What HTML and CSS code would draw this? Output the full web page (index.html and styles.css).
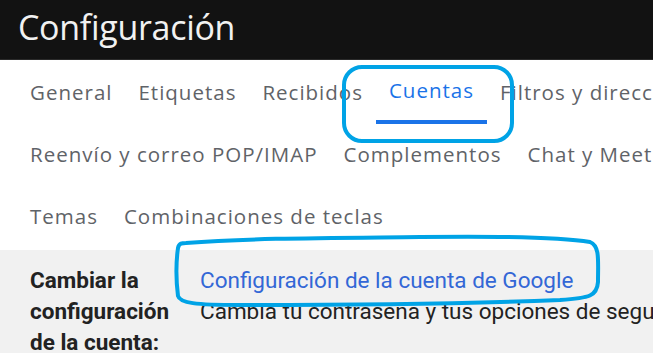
FILE: index.html
```html
<!DOCTYPE html>
<html lang="es">
<head>
    <meta charset="UTF-8">
    <title>Configuración</title>
    <link rel="stylesheet" href="styles.css">
</head>
<body>
    <div class="header">
        <h1>Configuración</h1>
    </div>

    <div class="tabs">
        <div class="tab-row">
            <a class="tab">General</a>
            <a class="tab">Etiquetas</a>
            <a class="tab">Recibidos</a>
            <a class="tab active">Cuentas</a>
            <a class="tab">Filtros y direcciones bloqueadas</a>
        </div>
        <div class="tab-row">
            <a class="tab">Reenvío y correo POP/IMAP</a>
            <a class="tab">Complementos</a>
            <a class="tab">Chat y Meet</a>
        </div>
        <div class="tab-row">
            <a class="tab">Temas</a>
            <a class="tab">Combinaciones de teclas</a>
        </div>
    </div>

    <div class="settings">
        <div class="setting-row">
            <div class="setting-label">Cambiar la configuración de la cuenta:</div>
            <div class="setting-value">
                <a class="link">Configuración de la cuenta de Google</a>
                <div>Cambia tu contraseña y tus opciones de seguridad</div>
            </div>
        </div>
    </div>

    <!-- marcas de anotación -->
    <svg class="marks" width="653" height="353" viewBox="0 0 653 353">
        <rect x="344" y="67" width="168" height="74" rx="18" fill="none" stroke="#00a3e6" stroke-width="4"/>
        <path d="M186 243 C 250 238, 330 238, 420 237 C 500 236, 560 237, 590 242 C 600 246, 598 260, 598 282 C 597 296, 590 298, 560 300 C 480 303, 360 305, 240 305 C 195 305, 180 303, 178 296 C 176 280, 176 262, 178 248 C 179 243, 182 243, 186 243 Z" fill="none" stroke="#00a3e6" stroke-width="4"/>
    </svg>
</body>
</html>
```

FILE: styles.css
```css
body {
    margin: 0;
    width: 653px;
    height: 353px;
    overflow: hidden;
    position: relative;
    background: #fff;
    font-family: "Open Sans", Roboto, sans-serif;
}
.header {
    background: #121212;
    height: 60px;
    border-bottom: 1px solid #2a2a2a;
    box-sizing: border-box;
    padding-left: 18px;
    display: flex;
    align-items: center;
}
.header h1 {
    margin: 0;
    color: #f1f1f1;
    font-weight: 400;
    font-size: 34px;
    letter-spacing: -0.3px;
    margin-top: -5px;
}
.tabs {
    padding-left: 17px;
    padding-top: 1px;
}
.tab-row {
    display: flex;
    white-space: nowrap;
    height: 62px;
}
.tab {
    padding: 0 13px;
    font-size: 20.5px;
    letter-spacing: 1px;
    color: #5f6368;
    line-height: 62px;
    height: 62px;
    box-sizing: border-box;
}
.tab.active {
    color: #1a73e8;
    border-bottom: 4px solid #1a73e8;
    height: 65px;
    margin-top: -2px;
}
.settings {
    background: #f1f1f1;
    margin-top: 3px;
    padding: 15px 0 0 30px;
    height: 120px;
}
.setting-row {
    display: flex;
    font-family: Roboto, sans-serif;
    font-size: 22.5px;
    line-height: 31px;
    color: #222;
}
.setting-label {
    width: 150px;
    font-weight: 700;
    flex-shrink: 0;
    margin-right: 20px;
}
.setting-value {
    white-space: nowrap;
}
.link {
    color: #3367d6;
}
.marks {
    position: absolute;
    left: 0;
    top: 0;
    pointer-events: none;
}
```
